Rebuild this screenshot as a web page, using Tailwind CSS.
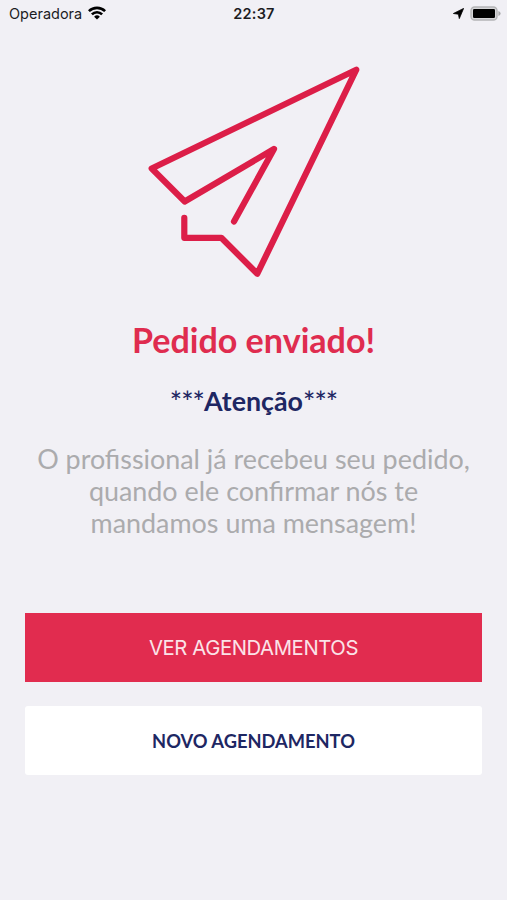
<!DOCTYPE html>
<html lang="pt-BR">
  <head>
    <meta charset="UTF-8" />
    <title>Pedido enviado</title>
    <meta name="viewport" content="width=device-width, initial-scale=1.0" />
    <script src="https://cdn.jsdelivr.net/npm/@tailwindcss/browser@4"></script>
  </head>
  <body class="bg-[#f1f0f5] h-[900px] overflow-hidden flex flex-col font-['Lato',sans-serif]">

    <!-- Status bar -->
    <header class="h-[27px] shrink-0 grid grid-cols-3 items-center pl-[9px] pr-[6px] font-['Inter',sans-serif] text-[14.5px] text-[#1c1c1f]">
      <div class="flex items-center gap-[6px]">
        <span>Operadora</span>
        <svg class="w-[18px] h-[14px] mb-[2px]" viewBox="0 0 18 14" fill="none" stroke="#000" stroke-width="2.6">
          <path d="M.9 5.2a11.5 11.5 0 0 1 16.2 0" />
          <path d="M3.9 8.3a7.2 7.2 0 0 1 10.2 0" />
          <path d="M9 13.6 6.1 10.7a4.1 4.1 0 0 1 5.8 0z" fill="#000" stroke="none" />
        </svg>
      </div>
      <span class="-ml-[2px] text-center font-semibold tracking-[0.2px]">22:37</span>
      <div class="flex items-center justify-end gap-[6px]">
        <svg class="w-[11px] h-[11px]" viewBox="0 0 11 11" fill="#000">
          <path d="M10.6.4 6.3 10.6 5.4 6.2.4 5.5z" stroke="#000" stroke-width=".8" stroke-linejoin="round" />
        </svg>
        <svg class="w-[31px] h-[15px]" viewBox="0 0 31 15">
          <rect x="1" y="1" width="26" height="13" rx="3.6" fill="#d6d6d8" stroke="#b4b4b6" stroke-width="1.4" />
          <rect x="3" y="3" width="22" height="9" rx="1.2" fill="#000" />
          <path d="M28.4 5v5q2.2-.7 2.2-2.5t-2.2-2.5z" fill="#a9a9ab" />
        </svg>
      </div>
    </header>

    <main class="flex flex-col items-center px-[25px] text-center">
      <!-- Paper plane -->
      <svg class="mt-7 ml-[2px] w-[230px] h-[230px]" viewBox="0 0 230 230" fill="none" stroke="#dc1e48" stroke-width="6.2" stroke-linecap="round" stroke-linejoin="round">
        <path d="M94 166.5 134 94 44.7 146.5 11.7 113.5 216.3 14.7 117.3 218.7 81.3 182.8H44.3V162.8" />
      </svg>

      <h1 class="mt-[34px] text-[34.1px] leading-[42px] font-bold text-[#df2c4f]">Pedido enviado!</h1>
      <h2 class="mt-[23px] h-[34px] text-[26.8px] leading-[34px] font-bold text-[#1e2763]">
        <span class="relative top-px text-[29px] leading-none font-medium tracking-[-0.9px]">***</span>Atenção<span class="relative top-px text-[29px] leading-none font-medium tracking-[-0.9px]">***</span>
      </h2>
      <p class="mt-[25px] text-[26.9px] leading-8 text-[#ababad]">
        O profissional já recebeu seu pedido,<br />
        quando ele confirmar nós te<br />
        mandamos uma mensagem!
      </p>

      <!-- Actions -->
      <button class="mt-[74px] w-full h-[69px] pt-[2px] bg-[#e12c4f] text-[#fbe3e8] font-['Inter',sans-serif] text-[20.3px] tracking-[-0.4px]">VER AGENDAMENTOS</button>
      <button class="mt-6 w-full h-[69px] pt-[2px] bg-white rounded-[3px] text-[#1e2763] text-[18.3px] font-bold">NOVO AGENDAMENTO</button>
    </main>
  </body>
</html>
